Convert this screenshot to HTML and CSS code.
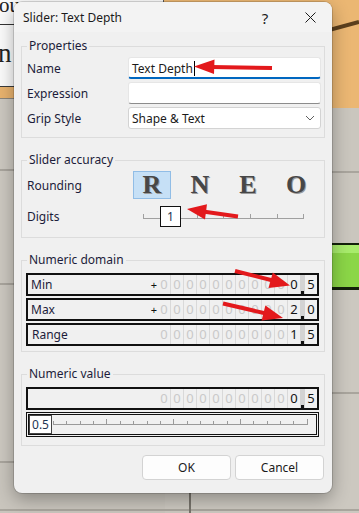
FILE: index.html
```html
<!DOCTYPE html>
<html lang="en">
<head>
  <meta charset="UTF-8" />
  <meta name="viewport" content="width=device-width, initial-scale=1.0" />
  <title>Slider: Text Depth</title>
  <link rel="stylesheet" href="styles.css">
</head>
<body>
  <!-- the app window behind the dialog -->
  <div class="backdrop-card">
    <div class="card-head">ou</div>
    <div class="card-body">n</div>
  </div>
  <svg class="backdrop-line" width="30" height="40" viewBox="0 0 30 40">
    <line x1="0" y1="30" x2="30" y2="22" stroke="#5b3f1d" stroke-width="4" />
  </svg>

  <div class="dialog">
    <div class="titlebar">
      <span class="title">Slider: Text Depth</span>
      <span class="cap-btn help">?</span>
      <span class="cap-btn close">
        <svg width="11" height="11" viewBox="0 0 11 11"><path d="M0.5 0.5l10 10M10.5 0.5l-10 10" stroke="#1b1b1b" stroke-width="1" fill="none" /></svg>
      </span>
    </div>

    <div class="dialog-body">
      <fieldset class="group props">
        <legend>Properties</legend>
        <div class="form-row">
          <label>Name</label>
          <div class="field focus">Text Depth<span class="caret"></span></div>
        </div>
        <div class="form-row">
          <label>Expression</label>
          <div class="field"></div>
        </div>
        <div class="form-row">
          <label>Grip Style</label>
          <div class="field select">Shape &amp; Text
            <svg class="chev" width="10" height="6" viewBox="0 0 10 6"><path d="M1 1l4 4 4-4" stroke="#606060" stroke-width="1" fill="none" /></svg>
          </div>
        </div>
      </fieldset>

      <fieldset class="group accuracy">
        <legend>Slider accuracy</legend>
        <div class="acc-row">
          <label>Rounding</label>
          <div class="rounding">
            <span class="round-btn active">R</span>
            <span class="round-btn">N</span>
            <span class="round-btn">E</span>
            <span class="round-btn">O</span>
          </div>
        </div>
        <div class="acc-row digits-row">
          <label>Digits</label>
          <div class="digit-slider">
            <svg width="170" height="26" viewBox="0 0 170 26">
              <g stroke="#a0a0a0" stroke-width="1">
                <line x1="5" y1="15.5" x2="165" y2="15.5" />
                <line x1="5.5" y1="11" x2="5.5" y2="16" />
                <line x1="32.5" y1="11" x2="32.5" y2="16" />
                <line x1="59.5" y1="11" x2="59.5" y2="16" />
                <line x1="85.5" y1="11" x2="85.5" y2="16" />
                <line x1="112.5" y1="11" x2="112.5" y2="16" />
                <line x1="139.5" y1="11" x2="139.5" y2="16" />
                <line x1="165.5" y1="11" x2="165.5" y2="16" />
              </g>
            </svg>
            <span class="thumb">1</span>
          </div>
        </div>
      </fieldset>

      <fieldset class="group numeric">
        <legend>Numeric domain</legend>
        <div class="numbox">
          <span class="numlabel">Min</span>
          <span class="sign">+</span>
          <div class="digits">
            <span class="d">0</span><span class="d">0</span><span class="d">0</span><span class="d">0</span><span class="d">0</span><span class="d">0</span><span class="d">0</span><span class="d">0</span><span class="d">0</span><span class="d">0</span><span class="d on">0</span><span class="dec"></span><span class="d on frac">5</span>
          </div>
        </div>
        <div class="numbox">
          <span class="numlabel">Max</span>
          <span class="sign">+</span>
          <div class="digits">
            <span class="d">0</span><span class="d">0</span><span class="d">0</span><span class="d">0</span><span class="d">0</span><span class="d">0</span><span class="d">0</span><span class="d">0</span><span class="d">0</span><span class="d">0</span><span class="d on">2</span><span class="dec"></span><span class="d on frac">0</span>
          </div>
        </div>
        <div class="numbox">
          <span class="numlabel range">Range</span>
          <div class="digits">
            <span class="d">0</span><span class="d">0</span><span class="d">0</span><span class="d">0</span><span class="d">0</span><span class="d">0</span><span class="d">0</span><span class="d">0</span><span class="d">0</span><span class="d">0</span><span class="d on">1</span><span class="dec"></span><span class="d on frac">5</span>
          </div>
        </div>
      </fieldset>

      <fieldset class="group numeric value">
        <legend>Numeric value</legend>
        <div class="numbox">
          <span class="numlabel"></span>
          <div class="digits">
            <span class="d">0</span><span class="d">0</span><span class="d">0</span><span class="d">0</span><span class="d">0</span><span class="d">0</span><span class="d">0</span><span class="d">0</span><span class="d">0</span><span class="d">0</span><span class="d on">0</span><span class="dec"></span><span class="d on frac">5</span>
          </div>
        </div>
        <div class="value-slider">
          <span class="value-box">0.5</span>
          <svg class="ticks" width="264" height="19" viewBox="0 0 264 19">
            <g stroke="#9a9a9a" stroke-width="1">
              <line x1="1" y1="9.5" x2="256" y2="9.5" />
              <line x1="1.5" y1="6" x2="1.5" y2="10" />
              <line x1="14.5" y1="6" x2="14.5" y2="10" />
              <line x1="28.5" y1="6" x2="28.5" y2="10" />
              <line x1="41.5" y1="6" x2="41.5" y2="10" />
              <line x1="54.5" y1="4" x2="54.5" y2="10" />
              <line x1="68.5" y1="6" x2="68.5" y2="10" />
              <line x1="81.5" y1="6" x2="81.5" y2="10" />
              <line x1="95.5" y1="6" x2="95.5" y2="10" />
              <line x1="108.5" y1="6" x2="108.5" y2="10" />
              <line x1="121.5" y1="4" x2="121.5" y2="10" />
              <line x1="135.5" y1="6" x2="135.5" y2="10" />
              <line x1="148.5" y1="6" x2="148.5" y2="10" />
              <line x1="161.5" y1="6" x2="161.5" y2="10" />
              <line x1="175.5" y1="6" x2="175.5" y2="10" />
              <line x1="188.5" y1="4" x2="188.5" y2="10" />
              <line x1="201.5" y1="6" x2="201.5" y2="10" />
              <line x1="215.5" y1="6" x2="215.5" y2="10" />
              <line x1="228.5" y1="6" x2="228.5" y2="10" />
              <line x1="241.5" y1="6" x2="241.5" y2="10" />
              <line x1="255.5" y1="4" x2="255.5" y2="10" />
            </g>
          </svg>
        </div>
      </fieldset>

      <div class="actions">
        <button class="btn">OK</button>
        <button class="btn">Cancel</button>
      </div>
    </div>
  </div>

  <!-- red annotation arrows drawn over the screenshot -->
  <svg class="marks" width="359" height="513" viewBox="0 0 359 513">
    <g fill="#e3191c" stroke="#e3191c" stroke-width="4">
      <line x1="211" y1="67" x2="272" y2="68" />
      <polygon stroke="none" points="194,66.5 214.5,59.5 214,74" />
      <line x1="203" y1="211.5" x2="238" y2="216.5" />
      <polygon stroke="none" points="187,209 207,204.2 205,219.4" />
      <line x1="235" y1="271" x2="273" y2="280.5" />
      <polygon stroke="none" points="290,285.5 268.5,288 272.8,272.6" />
      <line x1="223" y1="303.5" x2="266" y2="313.5" />
      <polygon stroke="none" points="283,318 261.6,320.6 265.4,305.4" />
    </g>
  </svg>
</body>
</html>
```

FILE: styles.css
```css
:root {
  --dlg-bg: #f0f0f0;
  --group-line: #dcdcdc;
  --text: #1b1b1b;
  --accent: #0067c0;
  --orange: #ebb773;
  --desk: #ccc8c0;
  --desk-line: #a9a59d;
}
*, *::before, *::after { box-sizing: border-box; }
body {
  margin: 0;
  width: 359px; height: 513px;
  overflow: hidden;
  position: relative;
  padding: 2px 0 0 14px;
  font-family: 'Noto Sans', sans-serif;
  font-size: 12px;
  color: var(--text);
  background:
    linear-gradient(to right, transparent 189px, #77736b 189px, #77736b 191px, transparent 191px) 0 100% / 100% 24px no-repeat,
    linear-gradient(var(--desk-line), var(--desk-line)) 0 509px / 100% 2px no-repeat,
    linear-gradient(to bottom,
      transparent 0 108px,
      #cac6be 108px 171px, var(--desk-line) 171px 173px,
      #cac6be 173px 243px, #13210b 243px 245px,
      #a8ec6c 245px 253px, #8bd647 253px 287px,
      #13210b 287px 290px, var(--desk) 290px 392px,
      var(--desk-line) 392px 394px, var(--desk) 394px) 100% 0 / 40px 100% no-repeat,
    linear-gradient(var(--orange), var(--orange)) 165px 0 / 200px 108px no-repeat,
    linear-gradient(to bottom,
      var(--orange) 0 86px, #3b3b3b 86px 87px,
      #e9b36e 87px 98px, #8a857c 98px 99px,
      var(--desk) 99px 169px, var(--desk-line) 169px 171px,
      var(--desk) 171px 283px, var(--desk-line) 283px 285px,
      var(--desk) 285px 461px, var(--desk-line) 461px 463px,
      #c9c5bd 463px) 0 0 / 165px 100% no-repeat,
    var(--desk);
}

/* window behind */
.backdrop-card {
  position: absolute; top: 0; left: 0;
  width: 164px; height: 86px;
  background: #fbfbfb;
  border-right: 1px solid #5a5a5a;
  font-family: 'Liberation Serif', serif;
  color: #222;
}
.card-head {
  height: 25px;
  border-bottom: 1px solid #333;
  font-size: 21px; line-height: 10px;
  margin-left: -1px;
  overflow: hidden;
}
.card-body { font-size: 27px; line-height: 40px; padding-top: 8px; margin-left: -2px; }
.backdrop-line { position: absolute; top: 0; right: 0; }

/* dialog */
.dialog {
  position: relative; z-index: 1;
  width: 318px; height: 491px;
  background: var(--dlg-bg);
  border-radius: 8px;
  box-shadow: 0 0 0 1px rgba(0,0,0,.14), 0 6px 18px rgba(0,0,0,.32);
}
.titlebar {
  height: 30px;
  display: flex; align-items: center;
  padding-left: 9px;
  background: #f3f3f3;
  border-radius: 8px 8px 0 0;
}
.title { flex: 1; padding-top: 1px; }
.cap-btn {
  height: 30px;
  display: flex; align-items: center; justify-content: center;
}
.help { width: 46px; font-size: 15px; padding-top: 1px; }
.close { width: 44px; }

.dialog-body { padding: 0 7px; }
.group {
  margin: 14px 0 0;
  padding: 3px 3px 8px 5px;
  border: 1px solid var(--group-line);
  min-inline-size: 0;
}
.group.props { margin-top: 6px; }
.group legend {
  padding: 0 2px;
  line-height: 16px;
  color: #1c1c3a;
}

.form-row {
  display: grid;
  grid-template-columns: 101px 1fr;
  align-items: center;
  height: 22px;
  margin-bottom: 3px;
}
.form-row:last-child { margin-bottom: 0; }
.form-row label { color: #1c1c3a; }
.field {
  height: 22px;
  display: flex; align-items: center;
  padding: 0 3px;
  background: #fff;
  border: 1px solid #e6e6e6;
  border-bottom-color: #8c8c8c;
  border-radius: 3px;
}
.field.focus { border-bottom: 2px solid var(--accent); padding-top: 1px; }
.caret { width: 1px; height: 15px; background: #000; margin-left: 1px; }
.field.select {
  border-color: #d3d3d3;
  justify-content: space-between;
  padding-right: 5px;
}

.acc-row {
  display: grid;
  grid-template-columns: 106px 1fr;
  align-items: center;
  height: 28px;
}
.acc-row label { color: #1c1c3a; }
.digits-row { height: 26px; margin-top: 4px; }
.rounding { display: flex; gap: 10px; }
.round-btn {
  width: 38px; height: 28px;
  display: flex; align-items: center; justify-content: center;
  font-family: 'Liberation Serif', serif;
  font-weight: bold;
  font-size: 26px;
  color: #474747;
  text-shadow: 1px 1px 0 #9a9a9a;
  border: 1px solid transparent;
}
.round-btn.active { background: #c6e0f6; border-color: #91bde6; }

.digit-slider { position: relative; width: 170px; height: 26px; margin-left: 5px; }
.digit-slider svg { display: block; }
.thumb {
  position: absolute; top: 3px; left: 22px;
  width: 21px; height: 21px;
  display: flex; align-items: center; justify-content: center;
  background: #fff;
  border: 1px solid #111;
  color: #1d3553;
}

.group.numeric { padding: 5px 5px 5px 4px; }
.group.numeric legend { margin-left: 1px; }
.group.value { padding-bottom: 8px; }
.numbox {
  display: flex; align-items: stretch;
  height: 23px;
  margin-bottom: 2px;
  border: 2px solid #111;
}
.numbox:last-child { margin-bottom: 0; }
.numlabel { flex: 1; align-self: center; padding-left: 3px; color: #1c1c3a; }
.numlabel.range { padding-left: 4px; }
.sign { align-self: center; font-size: 11px; color: #111; }
.digits { display: flex; }
.d {
  width: 13px;
  border-left: 1px solid #d9d9d9;
  text-align: center;
  font-size: 13px;
  line-height: 19px;
  color: #c9c9c9;
}
.d:first-child { border-left-color: transparent; }
.d.on { color: #141414; }
.d.frac { width: 12px; border-left: 0; }
.dec { width: 5px; background: #d3d3d3; position: relative; }
.dec::after {
  content: '';
  position: absolute; left: 1px; bottom: 0;
  width: 3px; height: 3px;
  background: #111;
}

.value-slider {
  display: flex;
  height: 25px;
  border: 3px double #111;
}
.value-box {
  width: 23px;
  display: flex; align-items: center; justify-content: center;
  background: #fff;
  border: 1px solid #444;
  font-size: 12px;
  color: #1d3553;
}
.ticks { display: block; }

.actions {
  display: flex; justify-content: flex-end; gap: 4px;
  margin-top: 9px;
  padding-right: 1px;
}
.btn {
  width: 89px; height: 25px;
  background: #fdfdfd;
  border: 1px solid #d3d3d3;
  border-radius: 4px;
  font: inherit;
  color: var(--text);
}

.marks { position: absolute; top: 0; left: 0; z-index: 2; pointer-events: none; }
```
